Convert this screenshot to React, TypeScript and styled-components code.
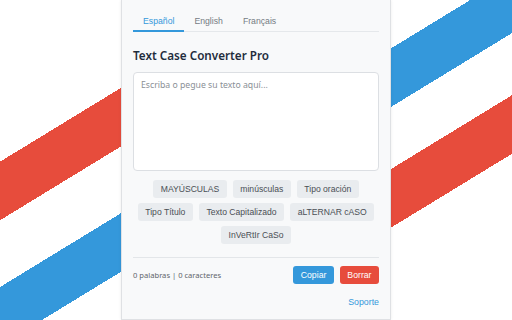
import React, { useState } from 'react'

import styled, { createGlobalStyle } from 'styled-components'

const GlobalStyle = createGlobalStyle`
    html, body {
        margin: 0;
        padding: 0;
    }

    body {
        width: 512px;
        height: 320px;
        overflow: hidden;
        font-family: "Liberation Sans", Arial, sans-serif;
    }
`;

const Backdrop = styled.div`
    width: 512px;
    height: 320px;
    display: flex;
    justify-content: center;
    align-items: flex-start;
    background: linear-gradient(148.6deg,
        #ffffff 0px, #ffffff 138px,
        #e74c3c 138px, #e74c3c 188px,
        #ffffff 188px, #ffffff 245px,
        #3498db 245px, #3498db 295px,
        #ffffff 295px, #ffffff 348px,
        #e74c3c 348px, #e74c3c 398px,
        #ffffff 398px);
`;

const Popup = styled.div`
    box-sizing: border-box;
    width: 270px;
    height: 320px;
    padding: 8px 11px 0;
    background: #f8f9fa;
    border: 1px solid #dfe1e4;
    border-top: none;
    box-shadow: 0 0 3px rgba(0, 0, 0, 0.08);
    display: flex;
    flex-direction: column;
`;

const Tabs = styled.div`
    display: flex;
    border-bottom: 1px solid #e5e8eb;
`;

const Tab = styled.button<{ $active?: boolean }>`
    font-family: "Liberation Sans", Arial, sans-serif;
    font-size: 8.7px;
    line-height: 13px;
    padding: 7px 10px 2px;
    margin-bottom: -1px;
    background: none;
    border: none;
    border-bottom: 2px solid ${p => (p.$active ? '#3498db' : 'transparent')};
    color: ${p => (p.$active ? '#3498db' : '#757b83')};
    cursor: pointer;
`;

const Title = styled.h1`
    margin: 16px 0 10px;
    font-family: "Noto Sans", "Open Sans", sans-serif;
    font-size: 11.7px;
    line-height: 14px;
    font-weight: 600;
    color: #1f2d3d;
`;

const TextInput = styled.textarea`
    box-sizing: border-box;
    width: 100%;
    height: 99px;
    margin: 0;
    padding: 6px 7px;
    resize: none;
    border: 1px solid #dcdfe3;
    border-radius: 4px;
    background: #ffffff;
    font-family: "Noto Sans", "Open Sans", sans-serif;
    font-size: 8.7px;
    line-height: 12px;
    color: #333;
    outline: none;

    &::placeholder {
        color: #8a8f96;
    }
`;

const CaseButtons = styled.div`
    display: flex;
    flex-wrap: wrap;
    justify-content: center;
    gap: 5px 6px;
    margin-top: 9px;
`;

const CaseButton = styled.button`
    height: 18px;
    padding: 0 7.5px;
    border: none;
    border-radius: 3px;
    background: #e9ecef;
    color: #4a4f55;
    font-family: "Liberation Sans", Arial, sans-serif;
    font-size: 8.6px;
    cursor: pointer;
`;

const Footer = styled.div`
    margin-top: 13px;
    padding-top: 8px;
    border-top: 1px solid #e3e6e9;
    display: flex;
    align-items: center;
    justify-content: space-between;
`;

const Stats = styled.span`
    font-family: "Noto Sans", "Open Sans", sans-serif;
    font-size: 7.6px;
    color: #5f656c;
`;

const Actions = styled.div`
    display: flex;
    gap: 6px;
`;

const ActionButton = styled.button<{ $color: string }>`
    height: 18px;
    padding: 0 7.5px;
    border: none;
    border-radius: 3px;
    background: ${p => p.$color};
    color: #ffffff;
    font-family: "Liberation Sans", Arial, sans-serif;
    font-size: 8.7px;
    cursor: pointer;
`;

const SupportRow = styled.div`
    display: flex;
    justify-content: flex-end;
    margin-top: 12px;
`;

const SupportLink = styled.a`
    font-family: "Liberation Sans", Arial, sans-serif;
    font-size: 8.8px;
    line-height: 12px;
    color: #3498db;
    text-decoration: none;
`;

const languages = ['Español', 'English', 'Français']

const cases = [
    'MAYÚSCULAS',
    'minúsculas',
    'Tipo oración',
    'Tipo Título',
    'Texto Capitalizado',
    'aLTERNAR cASO',
    'InVeRtIr CaSo',
]

const App = () => {
    const [lang, setLang] = useState('Español')

    return (
        <>
            <GlobalStyle />
            <Backdrop>
                <Popup>
                    <Tabs>
                        {languages.map(l => (
                            <Tab key={l} $active={l === lang} onClick={() => setLang(l)}>
                                {l}
                            </Tab>
                        ))}
                    </Tabs>

                    <Title>Text Case Converter Pro</Title>

                    <TextInput placeholder="Escriba o pegue su texto aquí..." />

                    <CaseButtons>
                        {cases.map(c => (
                            <CaseButton key={c}>{c}</CaseButton>
                        ))}
                    </CaseButtons>

                    <Footer>
                        <Stats>0 palabras | 0 caracteres</Stats>
                        <Actions>
                            <ActionButton $color="#3498db">Copiar</ActionButton>
                            <ActionButton $color="#e74c3c">Borrar</ActionButton>
                        </Actions>
                    </Footer>

                    <SupportRow>
                        <SupportLink href="#">Soporte</SupportLink>
                    </SupportRow>
                </Popup>
            </Backdrop>
        </>
    )
}

export default App
